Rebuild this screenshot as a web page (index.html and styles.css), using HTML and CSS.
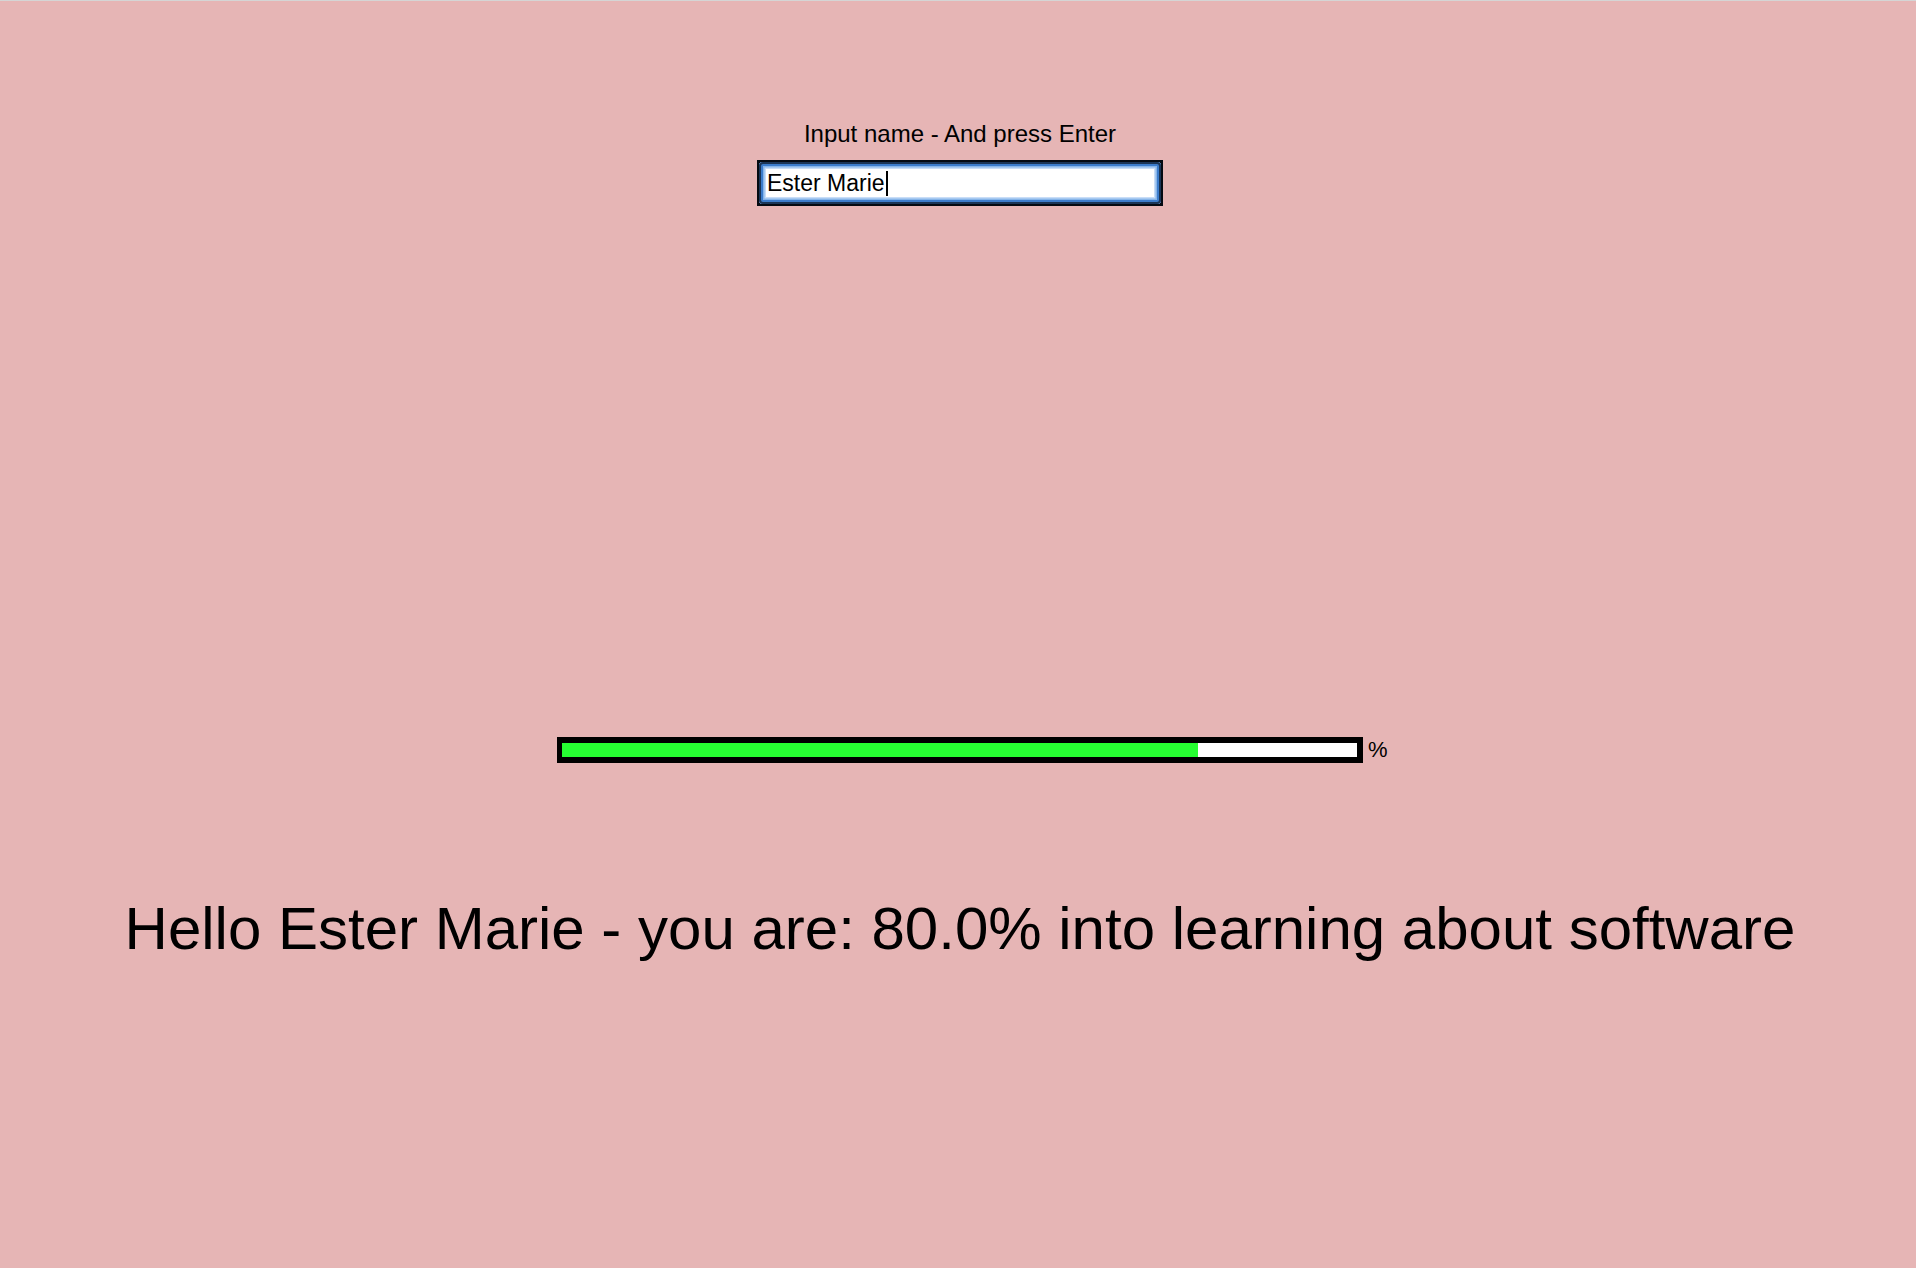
FILE: index.html
```html
<!DOCTYPE html>
<html lang="en">
<head>
<meta charset="utf-8">
<title>Learning progress</title>
<link rel="stylesheet" href="styles.css">
</head>
<body>
<main class="page">
  <label class="prompt" for="name">Input name - And press Enter</label>
  <div class="field-frame">
    <div class="field" id="name"><span class="field-text">Ester Marie</span><span class="caret"></span></div>
  </div>
  <div class="progress-row">
    <div class="bar"><div class="bar-fill" style="width: 80%"></div></div>
    <span class="pct">%</span>
  </div>
  <p class="greeting">Hello Ester Marie - you are: 80.0% into learning about software</p>
</main>
</body>
</html>
```

FILE: styles.css
```css
html {
  background: #e6b5b5;
}
body {
  margin: 0;
  border-top: 1px solid #d5d5d5;
  min-height: 1267px;
  background: #e6b5b5;
  font-family: "Liberation Sans", Arial, Helvetica, sans-serif;
  color: #000;
}
.page {
  display: flex;
  flex-direction: column;
  align-items: center;
  padding-top: 119px;
  padding-left: 4px;
}
.prompt {
  display: block;
  font-size: 24px;
  line-height: 28px;
  height: 28px;
}
.field-frame {
  margin-top: 12px;
  width: 406px;
  height: 46px;
  box-sizing: border-box;
  padding: 2px;
  background: #050a12;
}
.field {
  box-sizing: border-box;
  height: 42px;
  border-radius: 4px;
  background: #fff;
  box-shadow:
    inset 0 0 0 2px #1b3556,
    inset 0 0 0 4px #3c7ccb,
    inset 0 0 0 5.5px #86b5ea,
    inset 0 0 0 7px #c8ddf7;
  padding-left: 8px;
  display: flex;
  align-items: center;
  font-size: 23px;
  line-height: 26px;
}
.field-text {
  white-space: pre;
}
.caret {
  display: inline-block;
  width: 2px;
  height: 25px;
  margin-left: 1px;
  background: #000;
}
.progress-row {
  margin-top: 531px;
  width: 100%;
  display: grid;
  grid-template-columns: 1fr 806px 1fr;
  align-items: center;
}
.bar {
  grid-column: 2;
  box-sizing: border-box;
  height: 26px;
  border-style: solid;
  border-color: #000;
  border-width: 6px 6px 6px 5px;
  background: #fff;
}
.bar-fill {
  height: 100%;
  background: #26ff32;
}
.pct {
  grid-column: 3;
  justify-self: start;
  padding-left: 5px;
  font-size: 22px;
  line-height: 26px;
}
.greeting {
  margin: 131px 0 0;
  font-size: 60px;
  line-height: 70px;
  text-align: center;
}
```
